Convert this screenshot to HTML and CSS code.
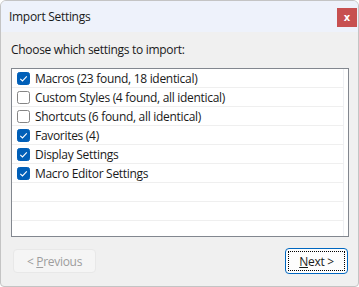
FILE: index.html
```html
<!DOCTYPE html>
<html>
<head>
<meta charset="utf-8">
<link rel="stylesheet" href="styles.css">
</head>
<body>
<div class="window">
  <div class="titlebar">
    <span class="title">Import Settings</span>
    <span class="close">x</span>
  </div>
  <div class="content">
    <div class="prompt">Choose which settings to import:</div>
    <div class="list">
      <div class="row"><span class="cb on"><svg viewBox="0 0 13 13" width="13" height="13"><path d="M3.3 6.8 L5.5 9 L9.8 4.4" fill="none" stroke="#fff" stroke-width="1.1"/></svg></span>Macros (23 found, 18 identical)</div>
      <div class="row"><span class="cb"></span>Custom Styles (4 found, all identical)</div>
      <div class="row"><span class="cb"></span>Shortcuts (6 found, all identical)</div>
      <div class="row"><span class="cb on"><svg viewBox="0 0 13 13" width="13" height="13"><path d="M3.3 6.8 L5.5 9 L9.8 4.4" fill="none" stroke="#fff" stroke-width="1.1"/></svg></span>Favorites (4)</div>
      <div class="row"><span class="cb on"><svg viewBox="0 0 13 13" width="13" height="13"><path d="M3.3 6.8 L5.5 9 L9.8 4.4" fill="none" stroke="#fff" stroke-width="1.1"/></svg></span>Display Settings</div>
      <div class="row"><span class="cb on"><svg viewBox="0 0 13 13" width="13" height="13"><path d="M3.3 6.8 L5.5 9 L9.8 4.4" fill="none" stroke="#fff" stroke-width="1.1"/></svg></span>Macro Editor Settings</div>
      <div class="row"></div>
      <div class="row"></div>
      <div class="row last"></div>
    </div>
    <div class="buttons">
      <div class="btn prev"><span>&lt;&nbsp;<u>P</u>revious</span></div>
      <div class="btn next"><span class="focus"><span><u>N</u>ext &gt;</span></span></div>
    </div>
  </div>
</div>
</body>
</html>
```

FILE: styles.css
```css
html, body {
  margin: 0;
  padding: 0;
  background: #ffffff;
}
body {
  font-family: "Open Sans", "Noto Sans", sans-serif;
  font-size: 12px;
  color: #1a1a1a;
}
.window {
  width: 357px;
  height: 285px;
  border: 1px solid #c4c4c4;
  border-radius: 6px 6px 4px 4px;
  overflow: hidden;
  display: flex;
  flex-direction: column;
  background: #f0f0f0;
}
.titlebar {
  height: 31px;
  background: #eef2fb;
  display: flex;
  align-items: center;
  justify-content: space-between;
  padding-left: 8px;
  padding-right: 0;
  box-sizing: border-box;
}
.title {
  font-size: 12px;
  letter-spacing: -0.3px;
  color: #1a1a1a;
  margin-top: -1px;
}
.close {
  width: 20px;
  height: 19px;
  background: #c75050;
  color: #fff;
  font-family: "DejaVu Sans", sans-serif;
  font-weight: bold;
  font-size: 10px;
  display: flex;
  align-items: center;
  justify-content: center;
  margin-right: 1px;
  margin-top: 2px;
  line-height: 1;
}
.content {
  flex: 1;
  padding: 10px 9px 0 10px;
  display: flex;
  flex-direction: column;
}
.prompt {
  letter-spacing: -0.3px;
  height: 16px;
  line-height: 16px;
  margin-bottom: 10px;
  color: #1a1a1a;
}
.list {
  height: 167px;
  border: 1px solid #82878f;
  background: #fff;
  overflow: hidden;
  box-shadow: inset -4px 0 0 #ffffff, inset -5px 0 0 #eef0f4;
}
.row {
  height: 18px;
  border-bottom: 1px solid #efefef;
  display: flex;
  align-items: center;
  padding-left: 5px;
  letter-spacing: -0.3px;
  color: #1a1a1a;
  margin-right: 4px;
}
.row.last {
  border-bottom: none;
}
.cb {
  width: 11px;
  height: 11px;
  border: 1px solid #858585;
  border-radius: 2.5px;
  background: #fff;
  margin-right: 5px;
  display: flex;
  flex-shrink: 0;
  position: relative;
}
.cb.on {
  background: #005fb8;
  border-color: #005fb8;
}
.cb svg {
  position: absolute;
  left: -1px;
  top: -1px;
}
.buttons {
  display: flex;
  justify-content: space-between;
  margin-top: 12px;
  padding-left: 2px;
}
.btn {
  height: 23px;
  box-sizing: border-box;
  border-radius: 4px;
  display: flex;
  align-items: center;
  justify-content: center;
  letter-spacing: -0.3px;
}
.prev {
  width: 83px;
  height: 24px;
  background: #f5f5f5;
  border: 1px solid #e8e8e8;
  color: #9d9d9d;
}
.prev u {
  text-decoration-color: #9d9d9d;
}
.next {
  width: 63px;
  height: 26px;
  background: #fdfdfd;
  border: 1px solid #0067c0;
  padding: 2px;
  margin-top: -1px;
  margin-right: 1px;
}
.focus {
  flex: 1;
  align-self: stretch;
  border: 1px dotted #000;
  display: flex;
  align-items: center;
  justify-content: center;
  color: #1a1a1a;
}
```
